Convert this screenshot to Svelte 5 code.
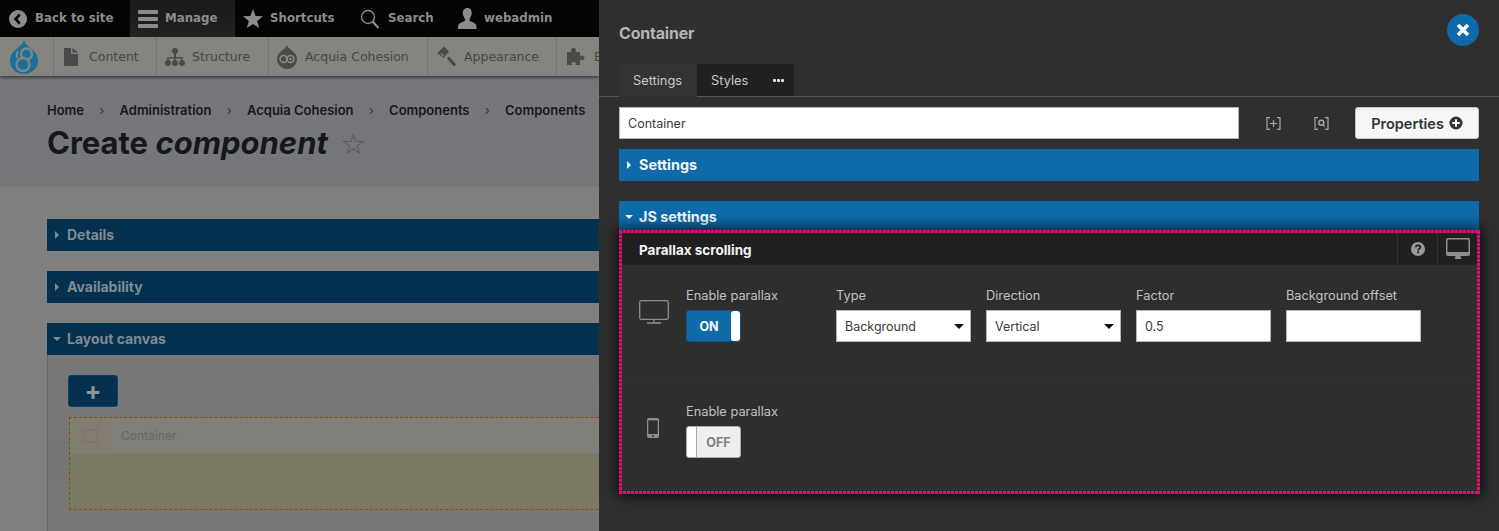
<script>
  const crumbs = ["Home", "Administration", "Acquia Cohesion", "Components", "Components"];
  const panels = ["Details", "Availability"];
  const fields = [
    { label: "Type", value: "Background", select: true },
    { label: "Direction", value: "Vertical", select: true },
    { label: "Factor", value: "0.5", select: false },
    { label: "Background offset", value: "", select: false }
  ];
</script>

<div class="screen">
  <div class="page">
    <div class="toolbar">
      <div class="tool first">
        <svg width="18" height="18" viewBox="0 0 18 18"><circle cx="9" cy="9" r="9" fill="#8c8c8c"/><path d="M10.8 4.5 6.5 9l4.3 4.5" fill="none" stroke="#050505" stroke-width="2.6"/></svg>
        <span>Back to site</span>
      </div>
      <div class="tool manage">
        <svg width="20" height="21" viewBox="0 0 20 21" fill="#8c8c8c"><rect y="2" width="20" height="4" rx="1"/><rect y="9" width="20" height="4" rx="1"/><rect y="16" width="20" height="4" rx="1"/></svg>
        <span>Manage</span>
      </div>
      <div class="tool shortcuts">
        <svg width="20" height="20" viewBox="0 0 20 20" fill="#8c8c8c"><path d="M10 0l2.6 6.9 7.4.4-5.8 4.6 2 7.1L10 15l-6.2 4 2-7.1L0 7.3l7.4-.4z"/></svg>
        <span>Shortcuts</span>
      </div>
      <div class="tool search">
        <svg width="20" height="20" viewBox="0 0 20 20" fill="none" stroke="#8c8c8c"><circle cx="8" cy="8" r="6.5" stroke-width="1.4"/><path d="M12.5 12.5 18.5 19" stroke-width="2.2"/></svg>
        <span>Search</span>
      </div>
      <div class="tool user">
        <svg width="19" height="21" viewBox="0 0 19 21" fill="#8c8c8c"><path d="M9.5 0c3 0 4.6 2.4 4.2 5.6-.3 2.400-1.100 4-2.100 5.200v2.200c2.500.9 5.400 2 6.400 3.500.5.800.5 2.700.5 4.500H0c0-1.800 0-3.700.5-4.500 1-1.500 3.900-2.600 6.400-3.500v-2.200C5.900 9.600 5.100 8 4.800 5.600 4.400 2.400 6.500 0 9.500 0z"/></svg>
        <span>webadmin</span>
      </div>
    </div>

    <div class="subbar">
      <div class="brand">
        <svg width="30" height="34" viewBox="0 0 30 34">
          <path d="M15 0c1 4 4 6 7 8.500 4 3.200 7 7 7 12C29 28 23 34 15 34S1 28 1 20.500c0-5 3-8.800 7-12C11 6 14 4 15 0z" fill="#1a6f9c"/>
          <circle cx="17.500" cy="14" r="5.500" fill="#1a6f9c" stroke="#85857f" stroke-width="2.400"/>
          <circle cx="14" cy="24.500" r="6.500" fill="#1a6f9c" stroke="#85857f" stroke-width="2.400"/>
          <path d="M9 11c-1.500 2.500-2 4.500-.5 7" fill="none" stroke="#85857f" stroke-width="2"/>
        </svg>
      </div>
      <div class="menu-item item-content">
        <svg width="14" height="20" viewBox="0 0 14 20" fill="#4a4a4a"><path d="M0 1h7v6h7v12H0zM8.500 1 14 5.500H8.500z"/></svg>
        <span>Content</span>
      </div>
      <div class="menu-item item-structure">
        <svg width="20" height="20" viewBox="0 0 20 20" fill="#4a4a4a"><circle cx="10" cy="4" r="3"/><circle cx="3" cy="16" r="3"/><circle cx="10" cy="16" r="3"/><circle cx="17" cy="16" r="3"/><path d="M9 4h2v6h6.800v6h-1.600v-4.400H10.800V16H9.200v-4.400H3.800V16H2.200v-6H9z"/></svg>
        <span>Structure</span>
      </div>
      <div class="menu-item item-acquia">
        <svg width="20" height="24" viewBox="0 0 20 24">
          <path d="M10 0c.6 2.400 2.600 3.600 4.600 5.200C17.800 7.700 20 10.500 20 14c0 5.500-4.500 10-10 10S0 19.500 0 14c0-3.500 2.200-6.300 5.400-8.800C7.400 3.600 9.400 2.400 10 0z" fill="#4a4a4a"/>
          <circle cx="6.500" cy="14" r="3.400" fill="none" stroke="#8b8b85" stroke-width="1.500"/>
          <circle cx="13.500" cy="14" r="3.400" fill="none" stroke="#8b8b85" stroke-width="1.500"/>
          <circle cx="13.500" cy="14" r="1.300" fill="#8b8b85"/>
        </svg>
        <span>Acquia Cohesion</span>
      </div>
      <div class="menu-item item-appearance">
        <svg width="20" height="21" viewBox="0 0 20 21" fill="none" stroke="#4a4a4a"><path d="M7 1.500 1.500 7l5 4 4.500-5.500z" fill="#4a4a4a" stroke-width="1.500"/><path d="M4 7.500l3 2.500" stroke="#85857f" stroke-width="1.500"/><path d="M11 11.500 18 19.500" stroke-width="3"/></svg>
        <span>Appearance</span>
      </div>
      <div class="menu-item item-extend">
        <svg width="20" height="20" viewBox="0 0 20 20" fill="#4a4a4a"><path d="M1 5h4.500C4.500 3.500 5 1 7.500 1S10.500 3.500 9.500 5H14v4c1.500-1 4.500-.8 4.500 1.800S15.500 13.500 14 12.500V18H9.500c1-1.500.3-3-1.800-3S5 16.500 6 18H1z"/></svg>
        <span>Extend</span>
      </div>
    </div>

    <div class="page-head">
      <nav class="crumbs">
        {#each crumbs as crumb, i}
          {#if i > 0}<span class="sep">›</span>{/if}
          <span>{crumb}</span>
        {/each}
      </nav>
      <h1>Create <em>component</em> <span class="fav">☆</span></h1>
    </div>

    <div class="page-body">
      {#each panels as panel}
        <div class="bar closed"><i class="tri-right"></i>{panel}</div>
      {/each}
      <div class="bar"><i class="tri-down"></i>Layout canvas</div>
      <div class="canvas">
        <div class="plus">+</div>
        <div class="drop">
          <div class="drop-head">
            <div class="drop-icon"><i></i></div>
            <span>Container</span>
          </div>
        </div>
      </div>
    </div>
  </div>

  <div class="panel">
    <div class="panel-top">
      <h2>Container</h2>
      <div class="close">
        <svg width="14" height="14" viewBox="0 0 14 14"><path d="M2 2l10 10M12 2 2 12" stroke="#fff" stroke-width="3.600"/></svg>
      </div>
    </div>
    <div class="tabs">
      <div class="tab active">Settings</div>
      <div class="tab">Styles</div>
      <div class="tab more"><i></i><i></i><i></i></div>
    </div>

    <div class="panel-body">
      <div class="name-row">
        <div class="input name">Container</div>
        <svg class="tag tag-add" width="15" height="13" viewBox="0 0 15 13" fill="none" stroke="#a8a8a8" stroke-width="1.200"><path d="M4 .6H1v11.800h3M11 .6h3v11.800h-3M7.500 3v7M4 6.500h7"/></svg>
        <svg class="tag tag-find" width="15" height="13" viewBox="0 0 15 13" fill="none" stroke="#a8a8a8" stroke-width="1.200"><path d="M4 .6H1v11.800h3M11 .6h3v11.800h-3"/><circle cx="7.300" cy="5.700" r="2.500" stroke-width="1.400"/><path d="M9 7.600l1.800 2" stroke-width="1.400"/></svg>
        <div class="properties">Properties
          <svg width="14" height="14" viewBox="0 0 14 14"><circle cx="7" cy="7" r="6.500" fill="#333"/><path d="M7 3.200v7.600M3.200 7h7.600" stroke="#f6f6f6" stroke-width="2"/></svg>
        </div>
      </div>

      <div class="bar bright"><i class="tri-right"></i>Settings</div>
      <div class="bar bright js"><i class="tri-down"></i>JS settings</div>

      <section class="card">
        <header class="card-head">
          <h3>Parallax scrolling</h3>
          <div class="card-cell help">
            <svg width="14" height="14" viewBox="0 0 14 14"><circle cx="7" cy="7" r="7" fill="#999"/><path d="M4.800 5.300C4.900 4 5.800 3.300 7.100 3.300S9.300 4.100 9.300 5.200c0 1.700-2.200 1.700-2.200 3.200" fill="none" stroke="#202020" stroke-width="1.700"/><rect x="6.200" y="9.400" width="1.800" height="1.800" fill="#202020"/></svg>
          </div>
          <div class="card-cell screen-cell">
            <svg width="24" height="21" viewBox="0 0 24 21" fill="#8e8e8e"><path d="M2 0h20a2 2 0 0 1 2 2v14a2 2 0 0 1-2 2H2a2 2 0 0 1-2-2V2a2 2 0 0 1 2-2zm.5 1.400a1 1 0 0 0-1 1V14h21V2.400a1 1 0 0 0-1-1z"/><path d="M9.500 18h5l.7 3H8.800z"/></svg>
          </div>
        </header>

        <div class="row row-desktop">
          <svg class="device" width="30" height="24" viewBox="0 0 30 24" fill="none" stroke="#8e8e8e" stroke-width="1.300"><rect x=".7" y=".7" width="28.600" height="18.600" rx="1.500"/><path d="M15 19.500V23M8 23h14"/></svg>
          <div class="field toggle-field">
            <label>Enable parallax</label>
            <div class="toggle on"><span>ON</span><i></i></div>
          </div>
          <div class="fields">
            {#each fields as field}
              <div class="field">
                <label>{field.label}</label>
                <div class="input">{field.value}{#if field.select}<i class="caret"></i>{/if}</div>
              </div>
            {/each}
          </div>
        </div>

        <div class="row row-mobile">
          <svg class="device phone" width="12" height="20" viewBox="0 0 12 20"><rect width="12" height="20" rx="2" fill="#8e8e8e"/><rect x="1.300" y="2.400" width="9.400" height="13.600" fill="#2e2e2e"/><circle cx="6" cy="18" r="1" fill="#2e2e2e"/></svg>
          <div class="field toggle-field">
            <label>Enable parallax</label>
            <div class="toggle off"><i></i><span>OFF</span></div>
          </div>
        </div>
      </section>
    </div>
  </div>
</div>

<style>
  :global(body) {
    margin: 0;
    background: #2f2f2f;
  }

  .screen {
    display: flex;
    width: 1499px;
    height: 531px;
    overflow: hidden;
    font-family: Inter, "Liberation Sans", sans-serif;
  }

  .page {
    width: 599px;
    flex: none;
    overflow: hidden;
    background: #808080;
    white-space: nowrap;
  }

  .toolbar {
    display: flex;
    height: 37px;
    background: #050505;
    color: #8c8c8c;
    font: bold 11.800px "DejaVu Sans", sans-serif;
  }

  .tool {
    display: flex;
    flex: none;
    align-items: center;
    gap: 7px;
    box-sizing: border-box;
  }

  .tool span {
    margin-top: -2px;
  }

  .tool.first {
    width: 130px;
    padding-left: 9px;
    gap: 8px;
  }

  .tool.manage {
    width: 105px;
    padding-left: 8px;
    background: linear-gradient(#1a1a1a, #222);
  }

  .tool.shortcuts {
    width: 125px;
    padding-left: 8px;
  }

  .tool.search {
    width: 98px;
    gap: 8px;
  }

  .subbar {
    display: flex;
    height: 39px;
    background: #85857f;
    color: #4a4a4a;
    font: 12.500px "DejaVu Sans", sans-serif;
    box-shadow: 0 2px 3px rgba(0, 0, 0, 0.45);
    position: relative;
  }

  .brand {
    flex: none;
    width: 54px;
    box-sizing: border-box;
    padding: 3px 0 0 9px;
    border-right: 1px solid #74746f;
  }

  .menu-item {
    display: flex;
    align-items: center;
    flex: none;
    box-sizing: border-box;
    border-right: 1px solid #74746f;
    color: #474747;
  }

  .item-content { width: 103px; padding-left: 10px; gap: 11px; }
  .item-structure { width: 112px; padding-left: 8px; gap: 7px; }
  .item-acquia { width: 159px; padding-left: 8px; gap: 8px; }
  .item-appearance { width: 129px; padding-left: 9px; gap: 7px; }
  .item-extend { padding-left: 9px; gap: 8px; border: 0; }

  .page-head {
    height: 111px;
    box-sizing: border-box;
    padding: 27px 0 0 47px;
    background: #76777a;
    color: #15171c;
  }

  .crumbs {
    display: flex;
    gap: 15.250px;
    font-size: 13px;
    font-weight: 600;
    line-height: 15px;
  }

  .sep {
    font-weight: 400;
    color: #33353a;
  }

  h1 {
    margin: 6px 0 0;
    font-size: 31px;
    font-weight: 700;
    line-height: 38px;
  }

  .fav {
    font-weight: 400;
    font-size: 29px;
    color: #54565a;
    margin-left: 5px;
    font-family: "DejaVu Sans", sans-serif;
  }

  .page-body {
    padding: 32px 0 0 47px;
  }

  .bar {
    display: flex;
    align-items: center;
    height: 32px;
    box-sizing: border-box;
    padding-bottom: 1px;
    background: #05314f;
    color: #7f8a92;
    font-size: 14px;
    font-weight: 700;
  }

  .bar.closed {
    margin-bottom: 20px;
  }

  .bar i {
    flex: none;
    width: 0;
    height: 0;
  }

  .tri-right {
    margin: 0 8px;
    border-left: 4px solid currentColor;
    border-top: 4px solid transparent;
    border-bottom: 4px solid transparent;
  }

  .tri-down {
    margin: 0 6px;
    border-top: 4px solid currentColor;
    border-left: 4px solid transparent;
    border-right: 4px solid transparent;
  }

  .canvas {
    height: 176px;
    box-sizing: border-box;
    padding: 20px 0 0 20px;
    border-left: 1px solid #666;
    background: linear-gradient(#787878, #767676 60%, #787878);
  }

  .plus {
    display: flex;
    align-items: center;
    justify-content: center;
    width: 50px;
    height: 32px;
    box-sizing: border-box;
    border: 1px solid #0a4468;
    border-radius: 3px;
    background: #05314f;
    color: #8a949b;
    font: 700 25px/1 Inter, sans-serif;
  }

  .drop {
    width: 700px;
    height: 93px;
    margin: 10px 0 0 1px;
    box-sizing: border-box;
    border: 1px dashed #8a5200;
    background: #7c7a65;
    background-clip: padding-box;
  }

  .drop-head {
    display: flex;
    align-items: center;
    height: 35px;
    background: #80807a;
    color: #66665f;
    font-size: 12px;
  }

  .drop-icon {
    display: flex;
    align-items: center;
    justify-content: center;
    width: 39px;
    height: 33px;
    margin: 0 11px 0 1px;
    background: #837c70;
  }

  .drop-icon i {
    width: 12px;
    height: 12px;
    border: 1px solid #777367;
  }

  .panel {
    flex: none;
    width: 900px;
    background: #2f2f2f;
  }

  .panel-top {
    display: flex;
    justify-content: space-between;
    height: 64px;
    box-sizing: border-box;
    padding: 14px 20px 0 20px;
  }

  h2 {
    margin: 9px 0 0;
    font-size: 16px;
    line-height: 20px;
    font-weight: 700;
    color: #b4b4b4;
    letter-spacing: -0.2px;
  }

  .close {
    display: flex;
    align-items: center;
    justify-content: center;
    width: 32px;
    height: 32px;
    border-radius: 50%;
    background: #0e6aa9;
  }

  .tabs {
    display: flex;
    height: 33px;
    box-sizing: border-box;
    padding-left: 20px;
    border-bottom: 1px solid #555;
    color: #c8c8c8;
    font-size: 12.800px;
  }

  .tab {
    height: 32px;
    box-sizing: border-box;
    display: flex;
    align-items: center;
    background: #212121;
    padding: 0 14px;
  }

  .tab.active {
    height: 33px;
    background: #333;
    width: 78px;
  }

  .tab.more {
    gap: 1px;
    padding: 0 10px 0 11px;
  }

  .tab.more i {
    width: 3px;
    height: 3px;
    background: #e4e4e4;
    border-radius: 1px;
  }

  .panel-body {
    padding: 10px 20px 0 20px;
  }

  .name-row {
    display: flex;
    align-items: center;
    height: 32px;
  }

  .input {
    position: relative;
    display: flex;
    align-items: center;
    width: 135px;
    height: 32px;
    box-sizing: border-box;
    padding: 0 8px;
    border: 1px solid #b4b4b4;
    background: #fff;
    color: #3a3a3a;
    font-size: 12.500px;
  }

  .input.name {
    width: 620px;
  }

  .tag {
    flex: none;
  }

  .tag-add { margin-left: 27px; }
  .tag-find { margin-left: 33px; }

  .properties {
    display: flex;
    align-items: center;
    justify-content: center;
    gap: 5px;
    width: 124px;
    height: 32px;
    margin-left: 26px;
    box-sizing: border-box;
    border: 1px solid #c4c4c4;
    border-radius: 3px;
    background: #f6f6f6;
    color: #333;
    font-size: 14.500px;
    font-weight: 600;
  }

  .bar.bright {
    margin-top: 10px;
    background: #0e6aa9;
    color: #f2f6f9;
    font-size: 14.400px;
  }

  .bar.js {
    margin-top: 20px;
  }

  .card {
    position: relative;
    z-index: 1;
    width: 861px;
    height: 264px;
    margin-top: -3px;
    padding: 3px;
    box-sizing: border-box;
    background: #2e2e2e;
    box-shadow: 0 0 12px 2px rgba(0, 0, 0, 0.75);
  }

  .card::after {
    content: "";
    position: absolute;
    inset: 0;
    pointer-events: none;
    background:
      repeating-linear-gradient(90deg, #ea0a74 0 3px, transparent 3px 4px) top / 100% 3px no-repeat,
      repeating-linear-gradient(90deg, #ea0a74 0 3px, transparent 3px 4px) bottom / 100% 3px no-repeat,
      repeating-linear-gradient(0deg, #ea0a74 0 3px, transparent 3px 4px) left / 3px 100% no-repeat,
      repeating-linear-gradient(0deg, #ea0a74 0 3px, transparent 3px 4px) right / 3px 100% no-repeat;
  }

  .card-head {
    display: flex;
    align-items: center;
    height: 32px;
    background: #202020;
  }

  h3 {
    flex: 1;
    margin: 0;
    padding: 2px 0 0 17px;
    color: #f4f4f4;
    font-size: 13.500px;
    font-weight: 700;
  }

  .card-cell {
    display: flex;
    align-items: center;
    justify-content: center;
    height: 32px;
    border-left: 1px solid #333;
  }

  .help { width: 39px; }
  .screen-cell { width: 40px; padding-bottom: 2px; box-sizing: border-box; }

  .row {
    display: flex;
    box-sizing: border-box;
    padding-left: 17px;
  }

  .row-desktop {
    height: 117px;
    padding-top: 24px;
    border-bottom: 1px solid #333;
  }

  .row-mobile {
    padding-top: 23px;
  }

  .device {
    flex: none;
    margin-top: 11px;
  }

  .phone {
    margin: 13px 10px 0 8px;
  }

  .toggle-field {
    width: 150px;
    margin-left: 17px;
  }

  .fields {
    display: flex;
    gap: 15px;
  }

  label {
    display: block;
    height: 21px;
    color: #c0c0c0;
    font-size: 12.800px;
    line-height: 14px;
    white-space: nowrap;
  }

  .caret {
    position: absolute;
    right: 6px;
    top: 13px;
    border-top: 5px solid #111;
    border-left: 5px solid transparent;
    border-right: 5px solid transparent;
  }

  .toggle {
    display: flex;
    align-items: stretch;
    width: 55px;
    height: 32px;
    box-sizing: border-box;
    border-radius: 3px;
    overflow: hidden;
    font-size: 12.500px;
    font-weight: 700;
  }

  .toggle span {
    flex: 1;
    display: flex;
    align-items: center;
    justify-content: center;
  }

  .toggle i {
    width: 9px;
    background: #fff;
  }

  .toggle.on {
    background: #0e6aa9;
    border: 1px solid #0c5687;
    color: #f4f8fb;
  }

  .toggle.on i {
    border-radius: 3px;
  }

  .toggle.off {
    background: #efefef;
    border: 1px solid #aaa;
    color: #808080;
  }

  .toggle.off i {
    border-right: 1px solid #aaa;
    border-radius: 3px 0 0 3px;
  }
</style>
